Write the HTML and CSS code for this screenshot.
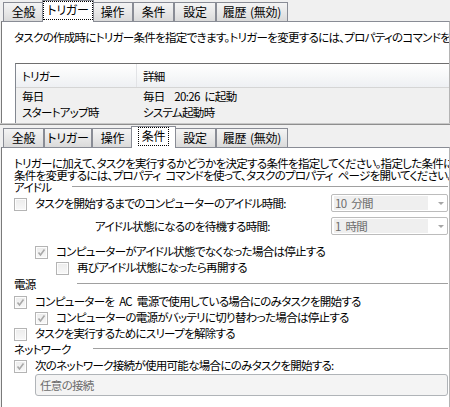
FILE: index.html
```html
<!DOCTYPE html>
<html lang="ja">
<head>
<meta charset="utf-8">
<link rel="stylesheet" href="styles.css">
</head>
<body>
<div class="shot shot-top">
  <div class="tabs">
    <div class="tab t-gen">全般</div>
    <div class="tab t-trg sel"><span class="focus">トリガー</span></div>
    <div class="tab t-act">操作</div>
    <div class="tab t-cnd">条件</div>
    <div class="tab t-set">設定</div>
    <div class="tab t-his">履歴 (無効)</div>
  </div>
  <div class="page page-top">
    <p class="desc">タスクの作成時にトリガー条件を指定できます。トリガーを変更するには、プロパティのコマンドを使</p>
    <div class="list">
      <div class="lhead"><div class="c1">トリガー</div><div class="c2">詳細</div></div>
      <div class="lrow"><div class="c1">毎日</div><div class="c2">毎日&nbsp; 20:26 に起動</div></div>
      <div class="lrow"><div class="c1">スタートアップ時</div><div class="c2">システム起動時</div></div>
    </div>
  </div>
</div>

<div class="shot shot-bottom">
  <div class="tabs">
    <div class="tab t-gen">全般</div>
    <div class="tab t-trg">トリガー</div>
    <div class="tab t-act">操作</div>
    <div class="tab t-cnd sel"><span class="focus">条件</span></div>
    <div class="tab t-set">設定</div>
    <div class="tab t-his">履歴 (無効)</div>
  </div>
  <div class="page page-cond">
    <p class="desc">トリガーに加えて、タスクを実行するかどうかを決定する条件を指定してください。指定した条件に<br>条件を変更するには、プロパティ コマンドを使って、タスクのプロパティ ページを開いてください。</p>

    <div class="grp grp-idle"><span class="glbl">アイドル</span><i class="rule"></i></div>
    <div class="row r1">
      <span class="cb"></span><span class="lbl">タスクを開始するまでのコンピューターのアイドル時間:</span>
      <div class="combo"><span class="cv">10 分間</span><span class="arr"></span></div>
    </div>
    <div class="row r2">
      <span class="lbl lbl-wait">アイドル状態になるのを待機する時間:</span>
      <div class="combo"><span class="cv">1 時間</span><span class="arr"></span></div>
    </div>
    <div class="row r3 lv2">
      <span class="cb on"><svg viewBox="0 0 11 11"><path d="M2.5 5.5 L4.5 8 L8.5 2.5"/></svg></span><span class="lbl">コンピューターがアイドル状態でなくなった場合は停止する</span>
    </div>
    <div class="row lv3">
      <span class="cb"></span><span class="lbl">再びアイドル状態になったら再開する</span>
    </div>

    <div class="grp grp-pow"><span class="glbl">電源</span><i class="rule"></i></div>
    <div class="row r5">
      <span class="cb on"><svg viewBox="0 0 11 11"><path d="M2.5 5.5 L4.5 8 L8.5 2.5"/></svg></span><span class="lbl">コンピューターを AC 電源で使用している場合にのみタスクを開始する</span>
    </div>
    <div class="row lv2">
      <span class="cb on"><svg viewBox="0 0 11 11"><path d="M2.5 5.5 L4.5 8 L8.5 2.5"/></svg></span><span class="lbl">コンピューターの電源がバッテリに切り替わった場合は停止する</span>
    </div>
    <div class="row">
      <span class="cb"></span><span class="lbl">タスクを実行するためにスリープを解除する</span>
    </div>

    <div class="grp grp-net"><span class="glbl">ネットワーク</span><i class="rule"></i></div>
    <div class="row r8">
      <span class="cb on"><svg viewBox="0 0 11 11"><path d="M2.5 5.5 L4.5 8 L8.5 2.5"/></svg></span><span class="lbl">次のネットワーク接続が使用可能な場合にのみタスクを開始する:</span>
    </div>
    <div class="netbox">任意の接続</div>
  </div>
</div>
</body>
</html>
```

FILE: styles.css
```css
* { box-sizing: border-box; }
html, body { margin: 0; padding: 0; }
body {
  width: 450px;
  height: 407px;
  overflow: hidden;
  background: #f0f0f0;
  color: #000;
  font-family: "Noto Sans CJK JP", "Noto Sans", sans-serif;
  font-size: 11.5px;
  letter-spacing: -0.7px;
  word-spacing: 3px;
  line-height: 12px;
  font-feature-settings: "palt" 1;
}
p { margin: 0; }

.shot { overflow: hidden; display: flex; flex-direction: column; }
.shot-top { height: 124px; border-bottom: 1px solid #c8c8c8; }
.shot-bottom { height: 283px; border-top: 1px solid #8e8e8e; }

/* tabs */
.tabs {
  display: flex;
  align-items: flex-end;
  padding-left: 3px;
  height: 21px;
  flex: none;
  position: relative;
  z-index: 2;
}
.shot-bottom .tabs { height: 22px; }
.tab {
  height: 19px;
  border: 1px solid #898c95;
  border-bottom: none;
  background: linear-gradient(#f4f4f4, #e8e8e8 50%, #dadada);
  display: flex;
  align-items: center;
  justify-content: center;
  white-space: nowrap;
  flex: none;
  font-size: 12px;
  letter-spacing: -0.2px;
  word-spacing: 1px;
}
.t-gen { width: 41px; }
.t-trg { width: 48px; }
.t-act { width: 41px; }
.t-cnd { width: 41px; }
.t-set { width: 42px; }
.t-his { width: 72px; }
.tab.sel {
  height: 22px;
  margin: 0 -2px -1px -2px;
  background: #fff;
  position: relative;
  z-index: 3;
  align-items: flex-start;
  padding-top: 1px;
}
.t-trg.sel { width: 52px; }
.t-cnd.sel { width: 45px; }
.focus {
  display: block;
  outline: 1px dotted #000;
  outline-offset: 0;
  padding: 2px 3px 3px;
  line-height: 12px;
}

/* pages */
.page {
  flex: 1;
  background: #fff;
  border-top: 1px solid #898c95;
  border-left: 1px solid #7a7a7a;
  border-right: 1px solid #b4b4b4;
  margin-left: 1px;
  overflow: hidden;
  display: flex;
  flex-direction: column;
  min-height: 0;
}
.desc {
  padding-left: 12px;
  white-space: nowrap;
  flex: none;
}
.page-top .desc { padding-top: 9px; }

/* list view */
.list {
  margin: 20px 0 0 13px;
  flex: 1;
  border-top: 1px solid #6e6e6e;
  border-left: 1px solid #828790;
  background: #f0f0f0;
  white-space: nowrap;
}
.lhead {
  display: flex;
  height: 24px;
  background: linear-gradient(#ffffff, #f6f7f8 55%, #eef0f3);
  border-bottom: 1px solid #d5d5d5;
  align-items: stretch;
}
.lhead .c1 { border-right: 1px solid #e2e3e6; }
.lhead > div { display: flex; align-items: center; }
.lrow { display: flex; height: 16px; align-items: center; }
.c1 { width: 121px; padding-left: 6px; flex: none; }
.c2 { padding-left: 6px; }

/* conditions page */
.page-cond { padding: 9px 1px 0 12px; }
.page-cond .desc { padding-left: 0; }

.grp { display: flex; align-items: center; height: 12px; flex: none; }
.glbl { flex: none; white-space: nowrap; }
.grp-idle .glbl { width: 58px; }
.grp-pow { margin-top: 3px; }
.grp-pow .glbl { width: 63px; }
.grp-net { margin-top: 2px; }
.grp-net .glbl { width: 79px; }
.rule {
  flex: 1;
  height: 2px;
  border-top: 1px solid #a0a0a0;
  border-bottom: 1px solid #ffffff;
}

.row {
  display: flex;
  align-items: center;
  height: 16px;
  flex: none;
  white-space: nowrap;
}
.r1 { height: 20px; }
.r2 { height: 20px; margin-top: 3px; }
.r3 { margin-top: 7px; }
.r5 { margin-top: 3px; }
.r8 { margin-top: 2px; }
.lv2 { padding-left: 21px; }
.lv3 { padding-left: 42px; }

.cb {
  width: 13px;
  height: 13px;
  flex: none;
  border: 1px solid #b4b4b4;
  background: linear-gradient(#ececec, #f8f8f8);
  box-shadow: inset 0 0 0 1px #fdfdfd;
  margin-right: 8px;
  margin-top: 2px;
  display: flex;
  align-items: center;
  justify-content: center;
}
.cb svg { width: 11px; height: 11px; }
.cb path { fill: none; stroke: #a8a8a8; stroke-width: 1.6; }
.lbl-wait { padding-left: 81px; }

.combo {
  margin-left: auto;
  width: 117px;
  height: 18px;
  border: 1px solid #bcbcbc;
  border-radius: 2px;
  background: #fff;
  display: flex;
  align-items: center;
  padding: 1px 2px;
}
.cv {
  flex: 1;
  align-self: stretch;
  display: flex;
  align-items: center;
  background: #efefef;
  color: #6d6d6d;
  padding-left: 1px;
  margin-right: 10px;
}
.arr {
  width: 0;
  height: 0;
  border-left: 3px solid transparent;
  border-right: 3px solid transparent;
  border-top: 3px solid #a6a6a6;
  margin-right: 1px;
}

.netbox {
  margin: 1px 0 0 21px;
  height: 22px;
  border: 1px solid #b0b4b8;
  border-radius: 3px;
  background: #f4f4f4;
  color: #6d6d6d;
  display: flex;
  align-items: center;
  padding-left: 4px;
  flex: none;
}
```
